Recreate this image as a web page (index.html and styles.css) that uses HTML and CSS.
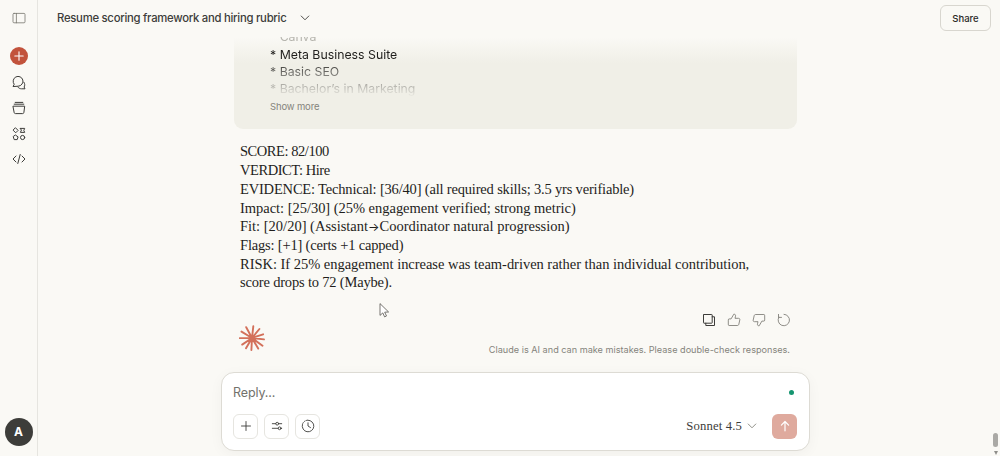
FILE: index.html
```html
<!DOCTYPE html>
<html lang="en">
<head>
    <meta charset="UTF-8">
    <meta name="viewport" content="width=device-width, initial-scale=1.0">
    <title>Resume scoring framework and hiring rubric</title>
    <link rel="stylesheet" href="styles.css">
</head>
<body>
    <div class="app">
        <nav class="sidebar">
            <svg class="icon icon-panel" viewBox="0 0 14 14"><rect x="1" y="2.4" width="12" height="9.4" rx="1"/><path d="M4.4 2.4v9.4"/></svg>
            <button class="new-chat" type="button" aria-label="New chat">
                <svg viewBox="0 0 10 10"><path d="M5 .8v8.4M.8 5h8.4"/></svg>
            </button>
            <svg class="icon" viewBox="0 0 14 14"><path d="M1.2 10.2l1-1.9A4.9 4.9 0 1 1 6.5 10.2z"/><path d="M11.9 6.2c1.1 1.6 1.1 3.4.2 4.8l.9 1.8H9.5c-1.5 0-2.8-.6-3.6-1.7"/></svg>
            <svg class="icon" viewBox="0 0 14 14"><path d="M1.3 5.2h11.4l-.8 6.2c-.1.8-.6 1.2-1.3 1.2H3.4c-.7 0-1.2-.4-1.3-1.2zM2.2 3.2h9.6M3.2 1.4h7.6"/></svg>
            <svg class="icon" viewBox="0 0 14 14"><path d="M3.7 1l2.4 2.4-2.4 2.4-2.4-2.4zM8.4 1.4h4.3l-.9 2 .9 2H8.4l.9-2zM3.7 8.2l2.4 1.7-.9 2.7h-3l-.9-2.7z"/><circle cx="10.6" cy="10.5" r="2.1"/></svg>
            <svg class="icon" viewBox="0 0 14 14"><path d="M4 4L1 7l3 3M10 4l3 3-3 3M8.2 2.5L5.8 11.5"/></svg>
            <div class="avatar">A</div>
        </nav>

        <main class="main">
            <header class="header">
                <h1 class="title">Resume scoring framework and hiring rubric</h1>
                <svg class="chevron" viewBox="0 0 10 6"><path d="M1.2 1L5 4.8 8.8 1"/></svg>
                <button class="share" type="button">Share</button>
            </header>

            <section class="chat">
                <div class="prompt">
                    <ul class="prompt-text">
                        <li class="cut">Canva</li>
                        <li>Meta Business Suite</li>
                        <li>Basic SEO</li>
                        <li>Bachelor’s in Marketing</li>
                    </ul>
                    <span class="show-more">Show more</span>
                </div>

                <p class="answer">
                    <span class="caps">SCORE: 82/100</span><br>
                    <span class="caps">VERDICT: Hire</span><br>
                    <span class="tight">EVIDENCE: Technical: [36/40] (all required skills; 3.5 yrs verifiable)</span><br>
                    <span class="normal">Impact: [25/30] (25% engagement verified; strong metric)</span><br>
                    <span>Fit: [20/20] (Assistant<span class="arrow">→</span>Coordinator natural progression)</span><br>
                    <span class="tight">Flags: [+1] (certs +1 capped)</span><br>
                    <span class="normal">RISK: If 25% engagement increase was team-driven rather than individual contribution,</span><br>
                    <span class="tight">score drops to 72 (Maybe).</span>
                </p>

                <div class="answer-footer">
                    <svg class="spark" viewBox="-13 -13 26 26">
                        <path d="M0 0L1.3-11.7M0 0L7.4-9M0 0L11.1-3.7M0 0L12 1.4M0 0L10.5 7.8M0 0L6.2 10.6M0 0L-.6 12M0 0L-6 10.2M0 0L-9.8 6.6M0 0L-12.2.1M0 0L-10.5-6.4M0 0L-5.8-10.8"/>
                    </svg>
                    <div class="footer-right">
                        <div class="actions">
                            <svg class="dark" viewBox="0 0 14 14"><rect x="1.5" y="1.5" width="8.7" height="8.7" rx=".5"/><path d="M10.2 3.8h2.3v8.7H3.8v-2.3"/></svg>
                            <svg viewBox="0 0 14 14"><path d="M1.3 6.7c0-.5.3-.8.8-.8h2L6.8 1.2c1.4-.1 2 .8 1.7 2L8 5.3h3.5c1 0 1.5.7 1.3 1.6l-1 4.5c-.2.7-.7 1.1-1.4 1.1H2.1c-.5 0-.8-.3-.8-.8z"/></svg>
                            <svg viewBox="0 0 14 14"><path d="M12.7 7.3c0 .5-.3.8-.8.8h-2l-2.7 4.7c-1.4.1-2-.8-1.7-2L6 8.7H2.5c-1 0-1.5-.7-1.3-1.6l1-4.5c.2-.7.7-1.1 1.4-1.1h8.3c.5 0 .8.3.8.8z"/></svg>
                            <svg viewBox="0 0 14 14"><path d="M1.5 1.4v3h3M1.8 4.2A5.7 5.7 0 1 0 7 1.3"/></svg>
                        </div>
                        <span class="disclaimer">Claude is AI and can make mistakes. Please double-check responses.</span>
                    </div>
                </div>
            </section>

            <form class="composer">
                <div class="composer-row">
                    <span class="placeholder">Reply...</span>
                    <span class="status-dot"></span>
                </div>
                <div class="composer-row">
                    <div class="tools">
                        <button class="tool" type="button" aria-label="Attach"><svg viewBox="0 0 14 14"><path d="M7 2.5v9M2.5 7h9"/></svg></button>
                        <button class="tool" type="button" aria-label="Tools"><svg viewBox="0 0 14 14"><path d="M2.3 4.7h3.4M8.7 4.7h3M2.3 9.3h5.8M11.1 9.3h.6"/><circle cx="7.2" cy="4.7" r="1.4"/><circle cx="9.6" cy="9.3" r="1.4"/></svg></button>
                        <button class="tool" type="button" aria-label="Extended thinking"><svg viewBox="0 0 14 14"><path d="M7 1.2a5.8 5.8 0 1 1-5.6 4.3M7 3.8V7l2.5 1.6"/><path class="dashes" d="M1.8 4.4A5.8 5.8 0 0 1 7 1.2"/></svg></button>
                    </div>
                    <div class="send-group">
                        <span class="model">Sonnet 4.5</span>
                        <svg class="chevron light" viewBox="0 0 10 6"><path d="M1.2 1L5 4.8 8.8 1"/></svg>
                        <button class="send" type="button" aria-label="Send"><svg viewBox="0 0 14 14"><path d="M7 11.8V2.7M3.4 6.1L7 2.5l3.6 3.6"/></svg></button>
                    </div>
                </div>
            </form>
        </main>
    </div>

    <div class="scroll-thumb"></div>
    <div class="scroll-arrow"></div>
    <svg class="cursor" viewBox="0 0 10 15"><path d="M1 1v11.4l2.8-2.5 1.8 4 1.9-.9-1.8-3.8 3.5-.2z"/></svg>
</body>
</html>
```
FILE: styles.css
```css
* {
    box-sizing: border-box;
}

body {
    margin: 0;
    height: 456px;
    overflow: hidden;
    background-color: #faf9f5;
    color: #1f1e1c;
    font-family: "Inter", sans-serif;
}

button {
    padding: 0;
    font-family: inherit;
}

svg {
    display: block;
    flex: none;
    fill: none;
    stroke: #3d3d3a;
    stroke-linecap: round;
    stroke-linejoin: round;
}

.app {
    display: flex;
    height: 456px;
}

/* sidebar */

.sidebar {
    display: flex;
    flex-direction: column;
    align-items: center;
    width: 38px;
    padding: 11px 0 10.5px;
    border-right: 1px solid #e6e5e0;
}

.icon {
    width: 14px;
    height: 14px;
    margin-bottom: 11.6px;
    stroke-width: 1;
}

.icon-panel {
    margin-bottom: 21.5px;
    stroke: #77766f;
    stroke-width: 0.8;
}

.new-chat {
    display: flex;
    align-items: center;
    justify-content: center;
    flex: none;
    width: 18px;
    height: 18px;
    margin-bottom: 11px;
    border: none;
    border-radius: 50%;
    background-color: #c2533c;
}

.new-chat svg {
    width: 10px;
    stroke: #fff;
    stroke-width: 1.1;
}

.avatar {
    width: 28px;
    height: 28px;
    margin-top: auto;
    border-radius: 50%;
    background-color: #3d3d3a;
    color: #fff;
    font-size: 12px;
    font-weight: 700;
    line-height: 28px;
    text-align: center;
}

/* header */

.main {
    flex: 1;
    display: flex;
    flex-direction: column;
    min-width: 0;
}

.header {
    display: flex;
    align-items: center;
    height: 37px;
    padding: 0 9px 1px 19px;
}

.title {
    width: 229px;
    margin: 0;
    font-size: 11.3px;
    font-weight: 500;
    letter-spacing: -0.26px;
    color: #3d3d3a;
    white-space: nowrap;
}

.chevron {
    width: 10px;
    height: 6px;
    margin-left: 14px;
    stroke-width: 0.9;
}

.share {
    width: 51px;
    height: 26px;
    margin-left: auto;
    border: 1px solid #d8d6cf;
    border-radius: 6px;
    background-color: transparent;
    color: #2b2a27;
    font-size: 9.5px;
    font-weight: 500;
}

/* conversation */

.chat {
    width: 563px;
    height: 335px;
    margin-left: 196px;
    overflow: hidden;
}

.prompt {
    height: 92px;
    padding-left: 36px;
    border-radius: 0 0 9px 9px;
    background: linear-gradient(#faf9f5 0, #f0efe7 26px);
    overflow: hidden;
}

.prompt-text {
    height: 60px;
    margin: 0;
    padding: 0;
    overflow: hidden;
    list-style: none;
    font-size: 12.3px;
    line-height: 17.4px;
    -webkit-mask-image: linear-gradient(#000 22px, rgba(0, 0, 0, 0.6) 36px, transparent 60px);
    mask-image: linear-gradient(#000 22px, rgba(0, 0, 0, 0.6) 36px, transparent 60px);
}

.prompt-text li::before {
    content: "* ";
}

.prompt-text .cut {
    margin-top: -8.8px;
    color: #b5b4ad;
}

.prompt-text .cut::before {
    visibility: hidden;
}

.show-more {
    display: block;
    color: #85847c;
    font-size: 9.5px;
    letter-spacing: -0.15px;
    line-height: 19px;
}

.answer {
    margin: 13.4px 0 0 6px;
    font-family: "Liberation Serif", serif;
    font-size: 14.5px;
    line-height: 18.7px;
    white-space: nowrap;
}

.caps {
    letter-spacing: -0.45px;
}

.tight {
    letter-spacing: -0.18px;
}

.normal {
    letter-spacing: -0.03px;
}

.arrow {
    font-family: "Inter", sans-serif;
    font-size: 12px;
    line-height: 1;
}

.answer-footer {
    display: flex;
    justify-content: space-between;
    padding: 21px 7px 0 5px;
}

.spark {
    width: 26px;
    height: 26px;
    margin-top: 12px;
    stroke: #d3705a;
    stroke-width: 1.9;
}

.footer-right {
    display: flex;
    flex-direction: column;
    align-items: flex-end;
}

.actions {
    display: flex;
    gap: 11px;
    margin-right: -1px;
}

.actions svg {
    width: 14px;
    height: 14px;
    stroke: #73726c;
    stroke-width: 0.8;
}

.actions .dark {
    stroke: #3d3d3a;
    stroke-width: 1;
}

.disclaimer {
    margin-top: 15px;
    color: #85847c;
    font-size: 9.15px;
    line-height: 16px;
    white-space: nowrap;
}

/* composer */

.composer {
    width: 589px;
    height: 79px;
    margin-left: 183px;
    padding: 10px 12px 0 11px;
    border: 1px solid #dddbd4;
    border-radius: 13px;
    background-color: #fff;
    box-shadow: 0 3px 14px rgba(0, 0, 0, 0.04);
}

.composer-row {
    display: flex;
    align-items: center;
    justify-content: space-between;
    height: 18px;
}

.composer-row + .composer-row {
    height: 26px;
    margin-top: 12px;
}

.placeholder {
    color: #73726c;
    font-size: 12.5px;
    letter-spacing: -0.1px;
}

.status-dot {
    width: 5px;
    height: 5px;
    margin-right: 3px;
    border-radius: 50%;
    background-color: #159570;
}

.tools {
    display: flex;
    gap: 6px;
}

.tool {
    display: flex;
    align-items: center;
    justify-content: center;
    width: 25px;
    height: 25px;
    border: 1px solid #e6e5e0;
    border-radius: 6px;
    background-color: #fff;
}

.tool svg {
    width: 14px;
    height: 14px;
    stroke-width: 0.9;
}

.dashes {
    stroke-dasharray: 1 1.4;
}

.send-group {
    display: flex;
    align-items: center;
}

.model {
    font-family: "Liberation Serif", serif;
    font-size: 12.7px;
    letter-spacing: 0.15px;
    color: #3d3d3a;
}

.send-group .chevron {
    margin-left: 5px;
}

.light {
    stroke: #85847c;
}

.send {
    display: flex;
    align-items: center;
    justify-content: center;
    width: 25px;
    height: 25px;
    margin-left: 15px;
    border: none;
    border-radius: 6px;
    background-color: #dfaa9e;
}

.send svg {
    width: 14px;
    height: 14px;
    stroke: #fff;
    stroke-width: 1.2;
}

/* overlays */

.scroll-thumb {
    position: absolute;
    right: 2px;
    bottom: 9px;
    width: 5px;
    height: 14px;
    border-radius: 3px;
    background-color: #aaa9a5;
}

.scroll-arrow {
    position: absolute;
    right: 2px;
    bottom: 1px;
    border: 2.5px solid transparent;
    border-top: 4px solid #8f8e8a;
    border-bottom: none;
}

.cursor {
    position: absolute;
    left: 378.5px;
    top: 303px;
    width: 10px;
    height: 15px;
    fill: #fff;
    stroke: #55544f;
    stroke-width: 0.8;
}
```
